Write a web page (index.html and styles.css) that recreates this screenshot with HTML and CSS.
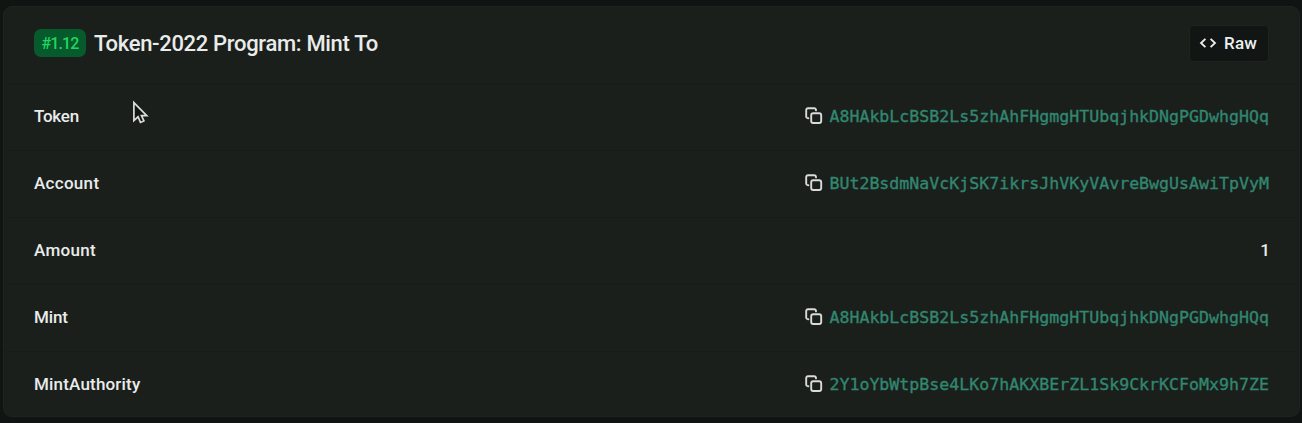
FILE: index.html
```html
<!DOCTYPE html>
<html lang="en">
<head>
<meta charset="utf-8">
<title>Token-2022 Program: Mint To</title>
<link rel="stylesheet" href="styles.css">
</head>
<body>
<svg class="defs" width="0" height="0" aria-hidden="true">
  <symbol id="copy" viewBox="0 0 18 18"><g fill="none" stroke="currentColor" stroke-width="1.9" stroke-linejoin="round" stroke-linecap="round"><rect x="6.2" y="6.2" width="10" height="9.8" rx="2"/><path d="M3.4 11.2H3a1.8 1.8 0 0 1-1.8-1.8V3A1.8 1.8 0 0 1 3 1.2h6.2A1.8 1.8 0 0 1 11 3v.4"/></g></symbol>
</svg>
<main class="card">
  <header class="header">
    <span class="badge"><span class="badge-text">#1.12</span></span>
    <h1 class="title">Token-2022 Program: Mint To</h1>
    <button class="raw"><svg class="code" viewBox="0 0 18 12"><path d="M6.4 1.8 2 6l4.4 4.2M11.6 1.8 16 6l-4.4 4.2"/></svg><span class="raw-text">Raw</span></button>
  </header>
  <div class="row"><span class="label token">Token</span><span class="value"><svg class="copy"><use href="#copy"/></svg><a class="address">A8HAkbLcBSB2Ls5zhAhFHgmgHTUbqjhkDNgPGDwhgHQq</a></span></div>
  <div class="row"><span class="label account">Account</span><span class="value"><svg class="copy"><use href="#copy"/></svg><a class="address">BUt2BsdmNaVcKjSK7ikrsJhVKyVAvreBwgUsAwiTpVyM</a></span></div>
  <div class="row"><span class="label amount">Amount</span><span class="number">1</span></div>
  <div class="row"><span class="label mint">Mint</span><span class="value"><svg class="copy"><use href="#copy"/></svg><a class="address">A8HAkbLcBSB2Ls5zhAhFHgmgHTUbqjhkDNgPGDwhgHQq</a></span></div>
  <div class="row"><span class="label authority">MintAuthority</span><span class="value"><svg class="copy"><use href="#copy"/></svg><a class="address">2Y1oYbWtpBse4LKo7hAKXBErZL1Sk9CkrKCFoMx9h7ZE</a></span></div>
</main>
<svg class="cursor" viewBox="0 0 18 26"><path d="M2 2v19l4.4-4 2.6 6 3.6-1.6-2.6-5.6h5.6z"/></svg>
</body>
</html>
```
FILE: styles.css
```css
* { box-sizing: border-box; }
body {
  margin: 0;
  height: 423px;
  padding: 6px 2px 6px 3px;
  overflow: hidden;
  background: #101413;
  color: #e9ecea;
  font-family: Roboto, "Liberation Sans", sans-serif;
}
.defs { position: absolute; }
.card {
  height: 411px;
  background: #1b1f1c;
  border: 1px solid #1e2220;
  border-radius: 9px;
  overflow: hidden;
}
.header {
  display: flex;
  align-items: center;
  height: 76px;
  padding: 0 30px 4px;
}
.badge {
  display: flex;
  align-items: center;
  justify-content: center;
  width: 52px;
  height: 28px;
  margin-right: 8px;
  border-radius: 7px;
  background: #075a2b;
  color: #1fd760;
  font-size: 16px;
  font-weight: 500;
}
.badge-text { letter-spacing: -0.9px; }
.title {
  margin: 0;
  padding-top: 2px;
  font-size: 22px;
  font-weight: 500;
  line-height: 28px;
  letter-spacing: -0.32px;
  white-space: nowrap;
}
.raw {
  display: flex;
  align-items: center;
  gap: 7px;
  width: 80px;
  height: 37px;
  margin-left: auto;
  padding: 0 0 1px 9px;
  border: 1px solid #1e2321;
  border-radius: 4px;
  background: #111514;
  color: #edf0ee;
  font: 500 17px Roboto, sans-serif;
}
.raw-text { letter-spacing: 0.2px; }
.code { width: 18px; height: 12px; fill: none; stroke: currentColor; stroke-width: 1.8; }
.row {
  display: flex;
  align-items: center;
  justify-content: space-between;
  height: 67px;
  padding: 0 30px 2px;
  border-top: 1px solid #181c19;
}
.label { font-size: 17px; font-weight: 500; }
.token { letter-spacing: -0.25px; }
.account, .amount { letter-spacing: 0.3px; }
.mint { letter-spacing: -0.15px; }
.authority { letter-spacing: 0.18px; }
.value { display: flex; align-items: center; gap: 6px; }
.copy { width: 18px; height: 18px; margin-bottom: 1px; color: #d8dbd9; }
.address {
  color: #318770;
  font: 16.6px/20px "DejaVu Sans Mono", monospace;
  -webkit-text-stroke: 0.35px #318770;
  padding-top: 1px;
}
.number { margin-right: -1px; font-size: 17px; font-weight: 500; }
.cursor {
  position: absolute;
  left: 132px;
  top: 100px;
  width: 17px;
  height: 26px;
  fill: #111513;
  stroke: #dadddb;
  stroke-width: 1.8;
}
```
